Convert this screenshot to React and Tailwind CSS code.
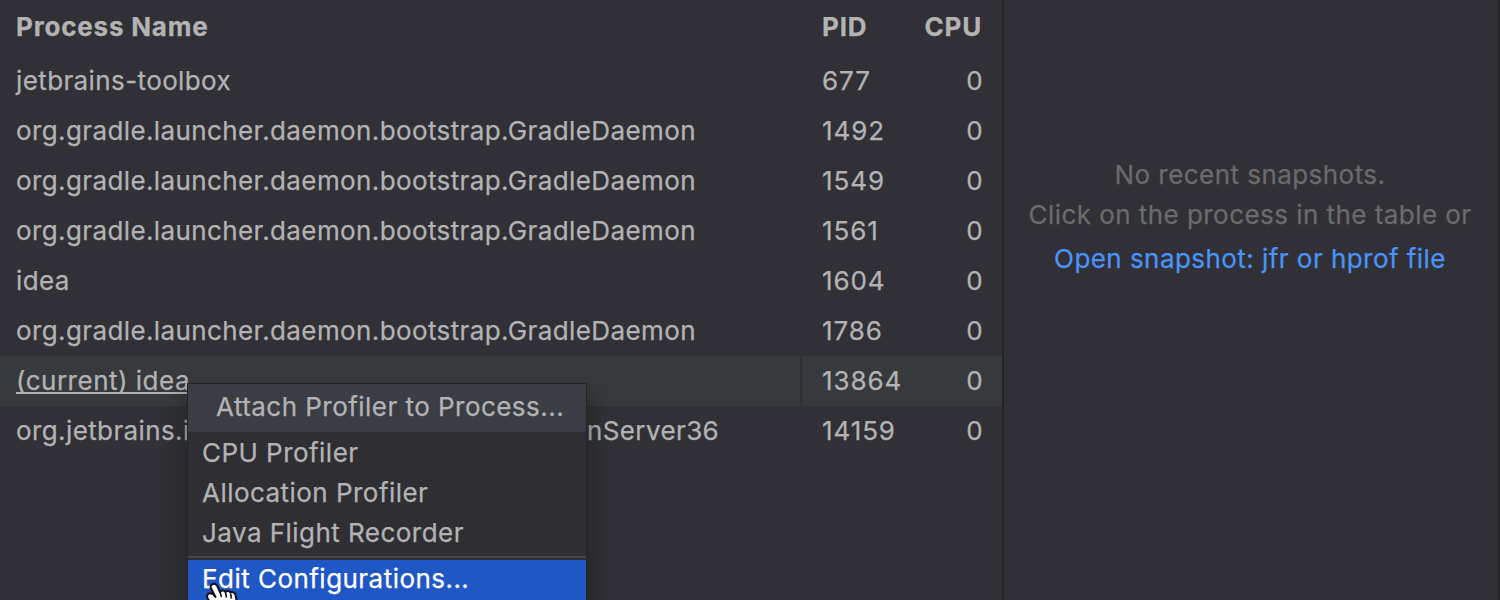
const daemon = 'org.gradle.launcher.daemon.bootstrap.GradleDaemon';

const processes = [
  { name: 'jetbrains-toolbox', pid: '677', cpu: '0' },
  { name: daemon, pid: '1492', cpu: '0' },
  { name: daemon, pid: '1549', cpu: '0' },
  { name: daemon, pid: '1561', cpu: '0' },
  { name: 'idea', pid: '1604', cpu: '0' },
  { name: daemon, pid: '1786', cpu: '0' },
  { name: '(current) idea', pid: '13864', cpu: '0', selected: true },
  { name: 'org.jetbrains.idea.maven.server.RemoteMavenServer36', pid: '14159', cpu: '0' },
];

function Row({ process }) {
  const { name, pid, cpu, selected } = process;
  return (
    <div className={`flex h-[50px] items-center ${selected ? 'bg-[#363a3c]' : ''}`}>
      <div className={`flex h-full w-[802px] items-center border-r-2 pl-4 ${selected ? 'border-[#303036] tracking-[0.5px]' : 'border-transparent'}`}>
        <span className={selected ? 'underline decoration-2 underline-offset-[2px] [text-decoration-skip-ink:none]' : ''}>{name}</span>
      </div>
      <div className="w-[110px] pl-5 tracking-[0.9px]">{pid}</div>
      <div className="flex-1 pr-[19px] text-right">{cpu}</div>
    </div>
  );
}

function ContextMenu() {
  return (
    <div className="absolute left-[188px] top-[384px] h-[240px] w-[398px] bg-[#2f2e33] tracking-[0.46px] shadow-[0_0_0_1px_#222426,0_16px_14px_10px_rgba(16,28,12,0.26)]">
      <div className="flex h-12 items-center bg-[#3b3d44] pb-0.5 pl-7">Attach Profiler to Process...</div>
      <div className="flex flex-col pt-px">
        <div className="flex h-10 items-center pl-[14px]">CPU Profiler</div>
        <div className="flex h-10 items-center pl-[14px]">Allocation Profiler</div>
        <div className="flex h-10 items-center pl-[14px]">Java Flight Recorder</div>
      </div>
      <div className="mb-0.5 mt-[3px] h-0.5 bg-[#47474a]" />
      <div className="flex h-10 items-center bg-[#1f57c4] pb-0.5 pl-[14px] text-white">Edit Configurations...</div>
    </div>
  );
}

function HandCursor() {
  return (
    <svg className="absolute left-[204px] top-[580px]" width="36" height="42" viewBox="0 0 36 42" fill="none">
      <path
        d="M8 4.500c2-1.500 4.500-.5 5.500 2l2.500 5.500c1-2 4.500-2 5.500 0 1-1.500 4-1.500 5 .5 1.500-1 4.500 0 5 2.500l1 5c.5 5-.5 9-2 12v6H15v-4L4 19c-1.500-2-1-5 1-5.500 2-.5 4.500.5 6.500 3.500L7 8.500C6.300 7 6.500 5.500 8 4.500z"
        fill="#fff"
        stroke="#101014"
        strokeWidth="2"
        strokeLinejoin="round"
      />
      <path d="M16 12l1.500 5M21.500 12.500l1 5M26.500 13.500l1 5" stroke="#101014" strokeWidth="1.600" />
    </svg>
  );
}

export default function App() {
  return (
    <div className="relative flex h-[600px] w-[1500px] overflow-hidden whitespace-nowrap bg-[#303036] font-['Inter',sans-serif] text-[26px] leading-none tracking-[0.39px] text-[#b3b3b4] [-webkit-text-stroke:0.25px]">
      <main className="w-[1002px]">
        <div className="flex h-14 items-center pb-0.5 font-bold tracking-[0.8px]">
          <div className="w-[802px] pl-4">Process Name</div>
          <div className="w-[100px] pl-5">PID</div>
          <div className="flex-1 pr-5 text-right">CPU</div>
        </div>
        {processes.map((process) => (
          <Row key={process.pid} process={process} />
        ))}
      </main>
      <aside className="flex flex-1 flex-col items-center border-l-2 border-r-2 border-l-[#252528] border-r-[#252528] pr-0.5 pt-[155px] tracking-[0.45px] text-[#6b6b6c]">
        <div className="flex h-10 items-center">No recent snapshots.</div>
        <div className="flex h-10 items-center">Click on the process in the table or</div>
        <div className="mt-1 flex h-10 items-center text-[#4a94f7]">Open snapshot: jfr or hprof file</div>
      </aside>
      <ContextMenu />
      <HandCursor />
    </div>
  );
}
